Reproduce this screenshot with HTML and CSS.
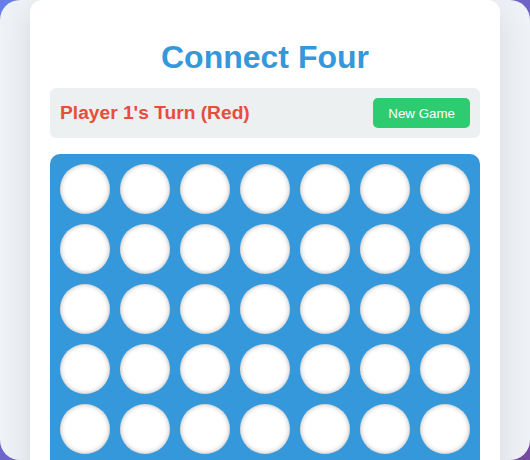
FILE: index.html
```html
<!DOCTYPE html>
<html lang="en">
<head>
    <meta charset="UTF-8">
    <meta name="viewport" content="width=device-width, initial-scale=1.0">
    <title>Connect Four</title>
    <link rel="stylesheet" href="styles.css">
</head>
<body>
    <div class="page">
        <div class="game-card">
            <h1 class="title">Connect Four</h1>

            <div class="status-bar">
                <p id="status" class="status-1">Player 1's Turn (Red)</p>
                <button class="btn-new" onclick="newGame()">New Game</button>
            </div>

            <div id="board" class="board"></div>
        </div>
    </div>

    <script>
let rows = 6;
let cols = 7;
let grid = [];
let player = 1;

function newGame(){
    let board = document.getElementById("board");
    board.innerHTML = "";
    grid = [];
    player = 1;

    for(let r = 0; r < rows; r++){
        grid[r] = [];
        for(let c = 0; c < cols; c++){
            grid[r][c] = 0;
            board.innerHTML += `<div class="cell" data-col="${c}" onclick="dropDisc(${c})"></div>`;
        }
    }

    document.getElementById("status").innerHTML = "Player 1's Turn (Red)";
    document.getElementById("status").className = "status-1";
}

function dropDisc(col){
    for(let r = rows - 1; r >= 0; r--){
        if(grid[r][col] == 0){
            grid[r][col] = player;
            let cell = document.getElementById("board").children[r * cols + col];
            cell.classList.add(player == 1 ? "red" : "yellow");
            player = player == 1 ? 2 : 1;
            let status = document.getElementById("status");
            status.innerHTML = player == 1 ? "Player 1's Turn (Red)" : "Player 2's Turn (Yellow)";
            status.className = "status-" + player;
            return;
        }
    }
}

newGame();
    </script>
</body>
</html>
```

FILE: styles.css
```css
*{
    margin: 0;
    padding: 0;
    box-sizing: border-box;
}

html{
    background: #667eea;
    background: linear-gradient(135deg, #667eea, #764ba2);
    min-height: 100%;
}

body{
    font-family: "Liberation Sans", Arial, sans-serif;
}

.page{
    background-color: #eef1f6;
    border-radius: 20px;
    height: 460px;
    overflow: hidden;
    display: flex;
    justify-content: center;
    align-items: flex-start;
}

.game-card{
    background-color: white;
    width: 470px;
    border-radius: 12px;
    padding: 20px;
    box-shadow: 0 10px 30px rgba(0, 0, 0, 0.1);
    flex-shrink: 0;
}

.title{
    color: #3498db;
    font-size: 32px;
    text-align: center;
    margin: 19px 0 12px;
}

.status-bar{
    background-color: #ecf0f1;
    border-radius: 6px;
    padding: 10px;
    display: flex;
    justify-content: space-between;
    align-items: center;
    margin-bottom: 16px;
}

.status-1,
.status-2{
    font-size: 19.2px;
    font-weight: bold;
}
.status-1{
    color: #e74c3c;
}
.status-2{
    color: #f1c40f;
}

.btn-new{
    background-color: #2ecc71;
    color: white;
    border: none;
    border-radius: 5px;
    font-family: "Liberation Sans", Arial, sans-serif;
    font-size: 13.33px;
    padding: 8px 15px;
    height: 30px;
    cursor: pointer;
}

.board{
    background-color: #3498db;
    border-radius: 10px;
    padding: 10px;
    display: grid;
    grid-template-columns: repeat(7, 50px);
    gap: 10px;
}

.cell{
    width: 50px;
    height: 50px;
    border-radius: 50%;
    background-color: white;
    box-shadow: inset 0 0 5px rgba(0, 0, 0, 0.3);
    cursor: pointer;
}
.cell.red{
    background-color: #e74c3c;
}
.cell.yellow{
    background-color: #f1c40f;
}
```
